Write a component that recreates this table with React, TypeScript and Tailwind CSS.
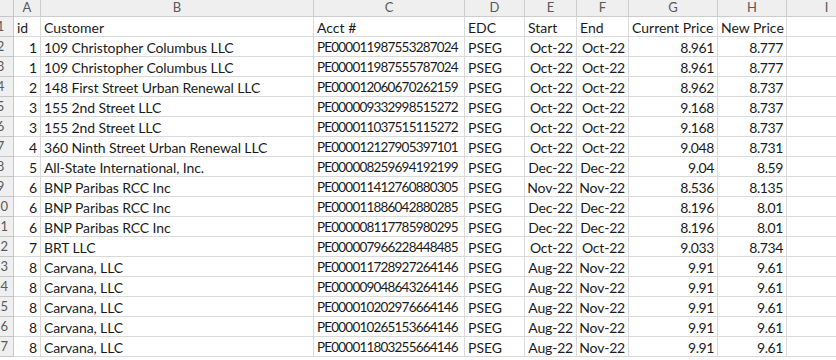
const rows: string[][] = [
  ['1', '109 Christopher Columbus LLC', 'PE000011987553287024', 'PSEG', 'Oct-22', 'Oct-22', '8.961', '8.777'],
  ['1', '109 Christopher Columbus LLC', 'PE000011987555787024', 'PSEG', 'Oct-22', 'Oct-22', '8.961', '8.777'],
  ['2', '148 First Street Urban Renewal LLC', 'PE000012060670262159', 'PSEG', 'Oct-22', 'Oct-22', '8.962', '8.737'],
  ['3', '155 2nd Street LLC', 'PE000009332998515272', 'PSEG', 'Oct-22', 'Oct-22', '9.168', '8.737'],
  ['3', '155 2nd Street LLC', 'PE000011037515115272', 'PSEG', 'Oct-22', 'Oct-22', '9.168', '8.737'],
  ['4', '360 Ninth Street Urban Renewal LLC', 'PE000012127905397101', 'PSEG', 'Oct-22', 'Oct-22', '9.048', '8.731'],
  ['5', 'All-State International, Inc.', 'PE000008259694192199', 'PSEG', 'Dec-22', 'Dec-22', '9.04', '8.59'],
  ['6', 'BNP Paribas RCC Inc', 'PE000011412760880305', 'PSEG', 'Nov-22', 'Nov-22', '8.536', '8.135'],
  ['6', 'BNP Paribas RCC Inc', 'PE000011886042880285', 'PSEG', 'Dec-22', 'Dec-22', '8.196', '8.01'],
  ['6', 'BNP Paribas RCC Inc', 'PE000008117785980295', 'PSEG', 'Dec-22', 'Dec-22', '8.196', '8.01'],
  ['7', 'BRT LLC', 'PE000007966228448485', 'PSEG', 'Oct-22', 'Oct-22', '9.033', '8.734'],
  ['8', 'Carvana, LLC', 'PE000011728927264146', 'PSEG', 'Aug-22', 'Nov-22', '9.91', '9.61'],
  ['8', 'Carvana, LLC', 'PE000009048643264146', 'PSEG', 'Aug-22', 'Nov-22', '9.91', '9.61'],
  ['8', 'Carvana, LLC', 'PE000010202976664146', 'PSEG', 'Aug-22', 'Nov-22', '9.91', '9.61'],
  ['8', 'Carvana, LLC', 'PE000010265153664146', 'PSEG', 'Aug-22', 'Nov-22', '9.91', '9.61'],
  ['8', 'Carvana, LLC', 'PE000011803255664146', 'PSEG', 'Aug-22', 'Nov-22', '9.91', '9.61'],
];

const header = ['id', 'Customer', 'Acct #', 'EDC', 'Start', 'End', 'Current Price', 'New Price'];
const letters = ['A', 'B', 'C', 'D', 'E', 'F', 'G', 'H', 'I'];

// per column extra classes for data cells (A..H)
const colCls = [
  'justify-end',
  'justify-start tracking-[-0.1px]',
  'justify-start text-[13.5px] tracking-[-0.8px]',
  'justify-start',
  'justify-end tracking-[-0.2px]',
  'justify-end tracking-[-0.2px]',
  'justify-end tracking-[-0.4px]',
  'justify-end tracking-[-0.4px]',
];

const gridCols = 'grid grid-cols-[26px_27px_273px_151px_60px_52px_52px_89px_69px_80px] -ml-[12px]';

export default function App() {
  return (
    <div className="w-[836px] h-[360px] overflow-hidden bg-white text-[#1b1b1b] font-['Lato','Liberation_Sans',sans-serif] text-[14px]">
      <div className={gridCols}>
        <div className="h-[17px] bg-[#efefef] border-r border-b border-[#c6c6c6]" />
        {letters.map((l) => (
          <div
            key={l}
            className="h-[17px] bg-[#efefef] border-r border-b border-[#cdcdcd] flex items-center justify-center text-[13px] text-[#595959]"
          >
            {l}
          </div>
        ))}

        {[header, ...rows].map((r, i) => (
          <Row key={i} n={i + 1} cells={r} isHeader={i === 0} />
        ))}
      </div>
    </div>
  );
}

function Row({ n, cells, isHeader }: { n: number; cells: string[]; isHeader: boolean }) {
  return (
    <>
      <div className="h-[20px] bg-[#efefef] border-r border-b border-[#c6c6c6] flex items-center justify-center pt-[1px] text-[13px] text-[#595959]">
        {n}
      </div>
      {cells.map((c, j) => (
        <div
          key={j}
          className={
            'h-[20px] border-r border-b border-[#dadada] flex items-center px-[3px] pt-[1px] whitespace-nowrap overflow-hidden ' +
            (isHeader ? 'justify-start' : colCls[j])
          }
        >
          {c}
        </div>
      ))}
      <div className="h-[20px] border-r border-b border-[#dadada]" />
    </>
  );
}
